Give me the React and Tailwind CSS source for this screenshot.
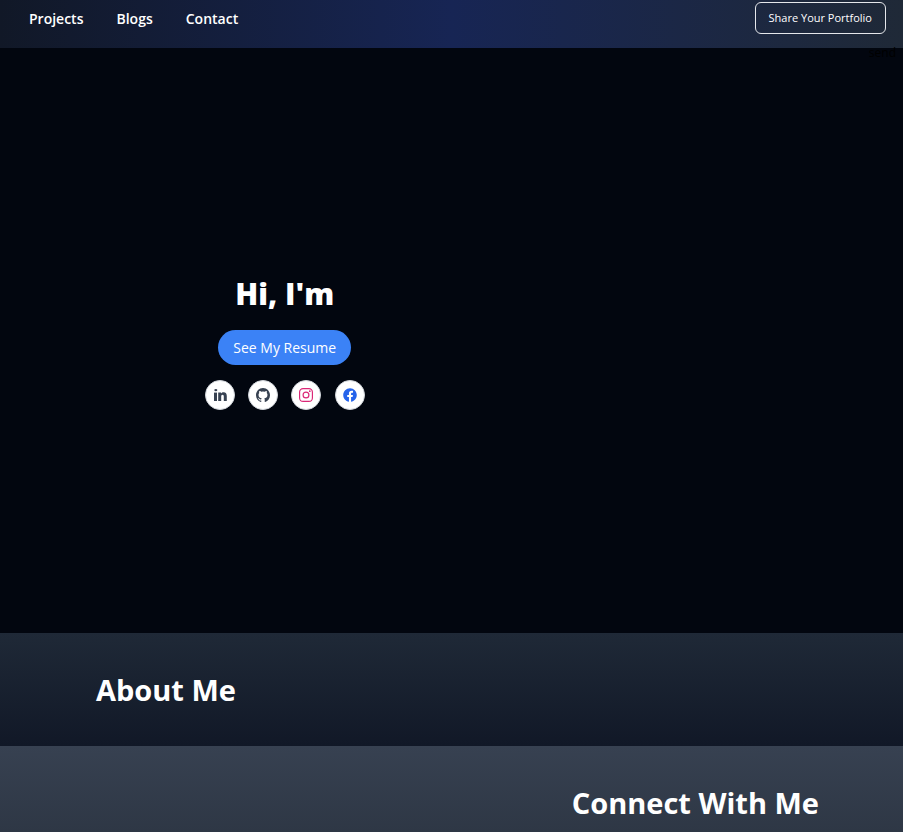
import { FaFacebook } from "react-icons/fa";
import { IoLogoGithub, IoLogoInstagram } from "react-icons/io5";

const navLinks = ["Projects", "Blogs", "Contact"];

function LinkedInMark({ className }) {
  return (
    <svg viewBox="0 0 16 16" fill="currentColor" className={className} aria-hidden="true">
      <path d="M2 5.6h3V14H2z" />
      <ellipse cx="3.8" cy="3.1" rx="1.5" ry="1.2" />
      <path d="M6.2 5.6H9v1c.6-.8 1.5-1.3 2.6-1.3 2.2 0 3.2 1.4 3.2 3.7v5h-3V9.6c0-1.1-.4-1.8-1.2-1.8-.9 0-1.4.7-1.4 1.8V14h-3z" />
    </svg>
  );
}

const socials = [
  { name: "LinkedIn", Icon: LinkedInMark, style: "size-4 text-[#374151]" },
  { name: "GitHub", Icon: IoLogoGithub, style: "size-4 text-[#374151]" },
  { name: "Instagram", Icon: IoLogoInstagram, style: "size-4 text-[#db2777]" },
  { name: "Facebook", Icon: FaFacebook, style: "size-3.5 text-[#2563eb]" },
];

function Header() {
  return (
    <header className="flex h-12 items-start justify-between bg-linear-to-r/srgb from-[#111827] via-[#172554] to-[#1f2937] pt-0.5 pr-[17px] pl-[29px]">
      <nav className="flex h-8 items-center gap-[33px] text-[14px] font-semibold text-white">
        {navLinks.map((label) => (
          <a key={label} href={"#" + label.toLowerCase()}>
            {label}
          </a>
        ))}
      </nav>
      <button className="h-8 rounded-md border border-[#e5e7eb] px-[13px] text-[11px] text-white">
        Share Your Portfolio
      </button>
    </header>
  );
}

function Hero() {
  return (
    <section className="flex h-[585px] flex-col bg-[#02060f]">
      <p className="h-3 pr-[7px] text-right text-[12px] leading-[10px] text-black">send</p>
      <div className="grid flex-1 grid-cols-2 px-[118px]">
        <div className="flex flex-col items-center pt-[214px]">
          <h1 className="text-[30px] leading-10 font-extrabold text-white">Hi, I'm</h1>
          <button className="mt-4 h-[35px] rounded-full bg-[#3b82f6] px-[15px] text-[14px] text-white">
            See My Resume
          </button>
          <div className="mt-[15px] flex w-40 justify-between">
            {socials.map(({ name, Icon, style }) => (
              <a
                key={name}
                href="#contact"
                aria-label={name}
                className="flex size-[30px] items-center justify-center rounded-full border border-[#d1d5db] bg-white"
              >
                <Icon className={style} />
              </a>
            ))}
          </div>
        </div>
      </div>
    </section>
  );
}

export default function App() {
  return (
    <div className="min-h-screen bg-[#2f3948] font-['Open_Sans','Noto_Sans',sans-serif]">
      <Header />
      <main>
        <Hero />
        <section className="bg-linear-to-b/srgb from-[#1f2937] to-[#111827] px-24 pt-[37px] pb-9">
          <h2 className="text-[29px] leading-10 font-bold text-white">About Me</h2>
        </section>
        <section
          id="contact"
          className="bg-linear-to-b/srgb from-[#374151] to-[#2e3745] px-[84px] pt-[37px] pb-[9px]"
        >
          <h2 className="text-right text-[29px] leading-10 font-bold text-white">Connect With Me</h2>
        </section>
      </main>
    </div>
  );
}
